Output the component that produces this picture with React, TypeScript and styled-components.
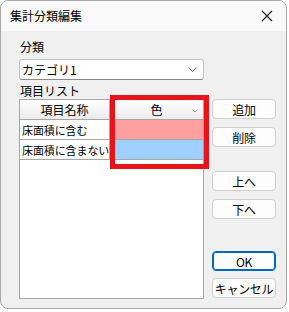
import React from "react";
import styled, { createGlobalStyle } from "styled-components";

const Global = createGlobalStyle`
  html, body { margin: 0; padding: 0; background: #ffffff; }
  body { font-family: "Noto Sans CJK JP", "Noto Sans", sans-serif; font-size: 12px; color: #000; }
  * { box-sizing: border-box; }
`;

const Window = styled.div`
  width: 287px;
  height: 309px;
  border: 1px solid #a8a8a8;
  border-radius: 8px;
  overflow: hidden;
  background: #f0f0f0;
  display: flex;
  flex-direction: column;
`;

const TitleBar = styled.div`
  height: 30px;
  background: #f9f9f9;
  display: flex;
  align-items: center;
  justify-content: space-between;
  padding: 0 10px 0 9px;
  flex-shrink: 0;
`;

const Title = styled.span`
  font-size: 12px;
  line-height: 16px;
`;

const CloseIcon = styled.svg`
  width: 12px;
  height: 12px;
  margin-right: 3px;
`;

const Content = styled.div`
  padding: 8px 0 0 18px;
  display: flex;
  flex-direction: column;
`;

const Label = styled.div<{ $mt?: number }>`
  font-size: 12px;
  line-height: 16px;
  height: 16px;
  padding-left: 1px;
  margin-top: ${(p) => p.$mt ?? 0}px;
`;

const Combo = styled.div`
  margin-top: 4px;
  width: 185px;
  height: 21px;
  background: #fff;
  border: 1px solid #c6c6c6;
  border-bottom-color: #8a8a8a;
  border-radius: 3px;
  display: flex;
  align-items: center;
  justify-content: space-between;
  padding: 0 6px 0 2px;
  font-size: 12px;
`;

const Chevron = styled.svg`
  width: 9px;
  height: 6px;
`;

const MainRow = styled.div`
  display: flex;
  gap: 8px;
`;

const TableWrap = styled.div`
  position: relative;
  width: 185px;
  height: 200px;
`;

const Table = styled.div`
  width: 185px;
  height: 200px;
  border: 1px solid #a6a6a6;
  background: #fff;
  display: grid;
  grid-template-columns: 90px 1fr;
  grid-auto-rows: 20px;
  align-content: start;
`;

const HeaderCell = styled.div<{ $last?: boolean }>`
  background: linear-gradient(#ffffff, #ebebeb);
  border-right: ${(p) => (p.$last ? "none" : "1px solid #a6a6a6")};
  border-bottom: 1px solid #a6a6a6;
  display: flex;
  align-items: center;
  justify-content: center;
  position: relative;
  font-size: 12px;
`;

const SortMark = styled.svg`
  position: absolute;
  right: 5px;
  top: 9px;
  width: 6px;
  height: 4px;
`;

const Cell = styled.div<{ $bg?: string; $last?: boolean }>`
  background: ${(p) => p.$bg ?? "#fff"};
  border-right: ${(p) => (p.$last ? "none" : "1px solid #a6a6a6")};
  border-bottom: 1px solid #a6a6a6;
  display: flex;
  align-items: center;
  padding-left: 2px;
  white-space: nowrap;
  overflow: hidden;
  font-size: 11px;
  letter-spacing: -0.1px;
`;

const Highlight = styled.div`
  position: absolute;
  left: 91px;
  top: -4px;
  width: 99px;
  height: 74px;
  border: 5px solid #e8141c;
  pointer-events: none;
`;

const ButtonCol = styled.div`
  display: flex;
  flex-direction: column;
  width: 64px;
`;

const Button = styled.div<{ $mt?: number; $primary?: boolean }>`
  height: 20px;
  margin-top: ${(p) => p.$mt ?? 0}px;
  background: #fdfdfd;
  border: 1px solid ${(p) => (p.$primary ? "#0067c0" : "#d0d0d0")};
  box-shadow: ${(p) => (p.$primary ? "inset 0 0 0 1px #0067c0" : "none")};
  border-radius: 4px;
  display: flex;
  align-items: center;
  justify-content: center;
  font-size: 12px;
  white-space: nowrap;
  letter-spacing: -0.3px;
`;

export default function App() {
  return (
    <>
      <Global />
      <Window>
        <TitleBar>
          <Title>集計分類編集</Title>
          <CloseIcon viewBox="0 0 12 12">
            <path d="M1 1 L11 11 M11 1 L1 11" stroke="#1a1a1a" strokeWidth="1.1" fill="none" />
          </CloseIcon>
        </TitleBar>
        <Content>
          <Label>分類</Label>
          <Combo>
            <span>カテゴリ1</span>
            <Chevron viewBox="0 0 9 6">
              <path d="M0.5 0.5 L4.5 4.5 L8.5 0.5" stroke="#555" strokeWidth="1" fill="none" />
            </Chevron>
          </Combo>
          <Label $mt={3}>項目リスト</Label>
          <MainRow>
            <TableWrap>
              <Table>
                <HeaderCell>項目名称</HeaderCell>
                <HeaderCell $last>
                  色
                  <SortMark viewBox="0 0 6 4">
                    <path d="M0.5 0.5 L3 3 L5.5 0.5" stroke="#888" strokeWidth="0.8" fill="none" />
                  </SortMark>
                </HeaderCell>
                <Cell>床面積に含む</Cell>
                <Cell $last $bg="#ffa0a0" />
                <Cell>床面積に含まない</Cell>
                <Cell $last $bg="#a0d0ff" />
              </Table>
              <Highlight />
            </TableWrap>
            <ButtonCol>
              <Button>追加</Button>
              <Button $mt={8}>削除</Button>
              <Button $mt={24}>上へ</Button>
              <Button $mt={8}>下へ</Button>
              <Button $mt={32} $primary>OK</Button>
              <Button $mt={7}>キャンセル</Button>
            </ButtonCol>
          </MainRow>
        </Content>
      </Window>
    </>
  );
}
